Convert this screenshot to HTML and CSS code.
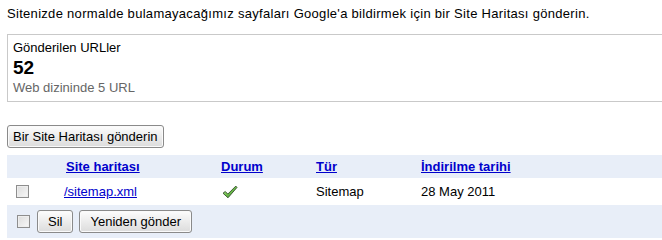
FILE: index.html
```html
<!DOCTYPE html>
<html lang="tr">
<head>
    <meta charset="UTF-8">
    <title>Site Haritaları</title>
    <link rel="stylesheet" href="styles.css">
</head>
<body>
    <div class="page">
        <p class="intro">Sitenizde normalde bulamayacağımız sayfaları Google'a bildirmek için bir Site Haritası gönderin.</p>

        <div class="stats-box">
            <div class="stats-label">Gönderilen URLler</div>
            <div class="stats-count">52</div>
            <div class="stats-sub">Web dizininde 5 URL</div>
        </div>

        <button class="btn btn-submit">Bir Site Haritası gönderin</button>

        <table class="sitemaps">
            <thead>
                <tr>
                    <th class="col-check"></th>
                    <th class="col-name"><a href="#">Site haritası</a></th>
                    <th class="col-status"><a href="#">Durum</a></th>
                    <th class="col-type"><a href="#">Tür</a></th>
                    <th class="col-date"><a href="#">İndirilme tarihi</a></th>
                </tr>
            </thead>
            <tbody>
                <tr class="data-row">
                    <td class="col-check"><input type="checkbox" class="cb"></td>
                    <td class="col-name"><a href="#">/sitemap.xml</a></td>
                    <td class="col-status">
                        <svg class="ok-icon" width="16" height="14" viewBox="0 0 16 14">
                            <defs>
                                <linearGradient id="okGrad" x1="0" y1="0" x2="1" y2="1">
                                    <stop offset="0" stop-color="#b4e39a"/>
                                    <stop offset="0.5" stop-color="#6fbf4c"/>
                                    <stop offset="1" stop-color="#2f7a22"/>
                                </linearGradient>
                            </defs>
                            <path d="M1 8.2 L3.3 6.5 L5.8 9.1 L13.8 1.1 L15 2.4 L6 12.8 Z" fill="url(#okGrad)" stroke="#34502c" stroke-width="0.9" stroke-linejoin="round"/>
                        </svg>
                    </td>
                    <td class="col-type">Sitemap</td>
                    <td class="col-date">28 May 2011</td>
                </tr>
                <tr class="action-row">
                    <td colspan="5">
                        <div class="actions">
                            <input type="checkbox" class="cb">
                            <button class="btn btn-small">Sil</button>
                            <button class="btn btn-small">Yeniden gönder</button>
                        </div>
                    </td>
                </tr>
            </tbody>
        </table>
    </div>
</body>
</html>
```

FILE: styles.css
```css
/* --- Base --- */
body {
    margin: 0;
    font-family: "Liberation Sans", Arial, sans-serif;
    font-size: 13px;
    color: #000;
    background: #fff;
    overflow: hidden;
}

a {
    color: #0000cc;
}

.page {
    width: 720px;
    padding: 6px 0 0 7px;
}

.intro {
    margin: 0 0 12px;
    line-height: 16px;
    letter-spacing: 0.3px;
}

/* --- Stats box --- */
.stats-box {
    border: 1px solid #c9c9c9;
    padding: 5px;
    line-height: 16px;
    margin-bottom: 23px;
}

.stats-count {
    font-size: 19px;
    font-weight: bold;
    line-height: 24px;
}

.stats-sub {
    color: #666;
}

/* --- Buttons --- */
.btn {
    font-family: "Liberation Sans", Arial, sans-serif;
    font-size: 13px;
    height: 23px;
    padding: 0 5px;
    color: #000;
    border: 1px solid #8a8a8a;
    border-radius: 3px;
    background: linear-gradient(#fdfdfd, #ececec 50%, #dcdcdc);
    box-shadow: inset 0 0 0 1px #fafafa;
}

.btn-submit {
    display: block;
    margin-bottom: 7px;
}

.btn-small {
    padding: 0 10px;
}

/* --- Table --- */
.sitemaps {
    width: 655px;
    border-collapse: collapse;
}

.sitemaps th {
    background: #e8eef8;
    text-align: left;
    font-weight: bold;
    height: 23px;
    padding: 0;
}

.sitemaps td {
    padding: 0;
}

.col-check {
    width: 57px;
}

.col-name {
    width: 157px;
}

.sitemaps th.col-name {
    padding-left: 2px;
    width: 155px;
}

.col-status {
    width: 95px;
}

.col-type {
    width: 105px;
}

.data-row td {
    height: 27px;
}

.data-row .col-check {
    width: 48px;
    padding-left: 9px;
}

.ok-icon {
    display: block;
    margin-left: 1px;
}

.action-row td {
    background: #e8eef8;
    height: 33px;
}

.actions {
    display: flex;
    align-items: center;
    gap: 6px;
    padding-left: 10px;
}

.actions .cb {
    margin: 0 1px 0 0;
}

/* old-style grey checkbox */
.cb {
    appearance: none;
    -webkit-appearance: none;
    width: 13px;
    height: 13px;
    margin: 0;
    border: 1px solid #8e8e8e;
    background: linear-gradient(135deg, #dcdcdc, #f8f8f8);
    box-shadow: inset 0 0 0 1px #eee;
    vertical-align: middle;
    display: block;
}
```
